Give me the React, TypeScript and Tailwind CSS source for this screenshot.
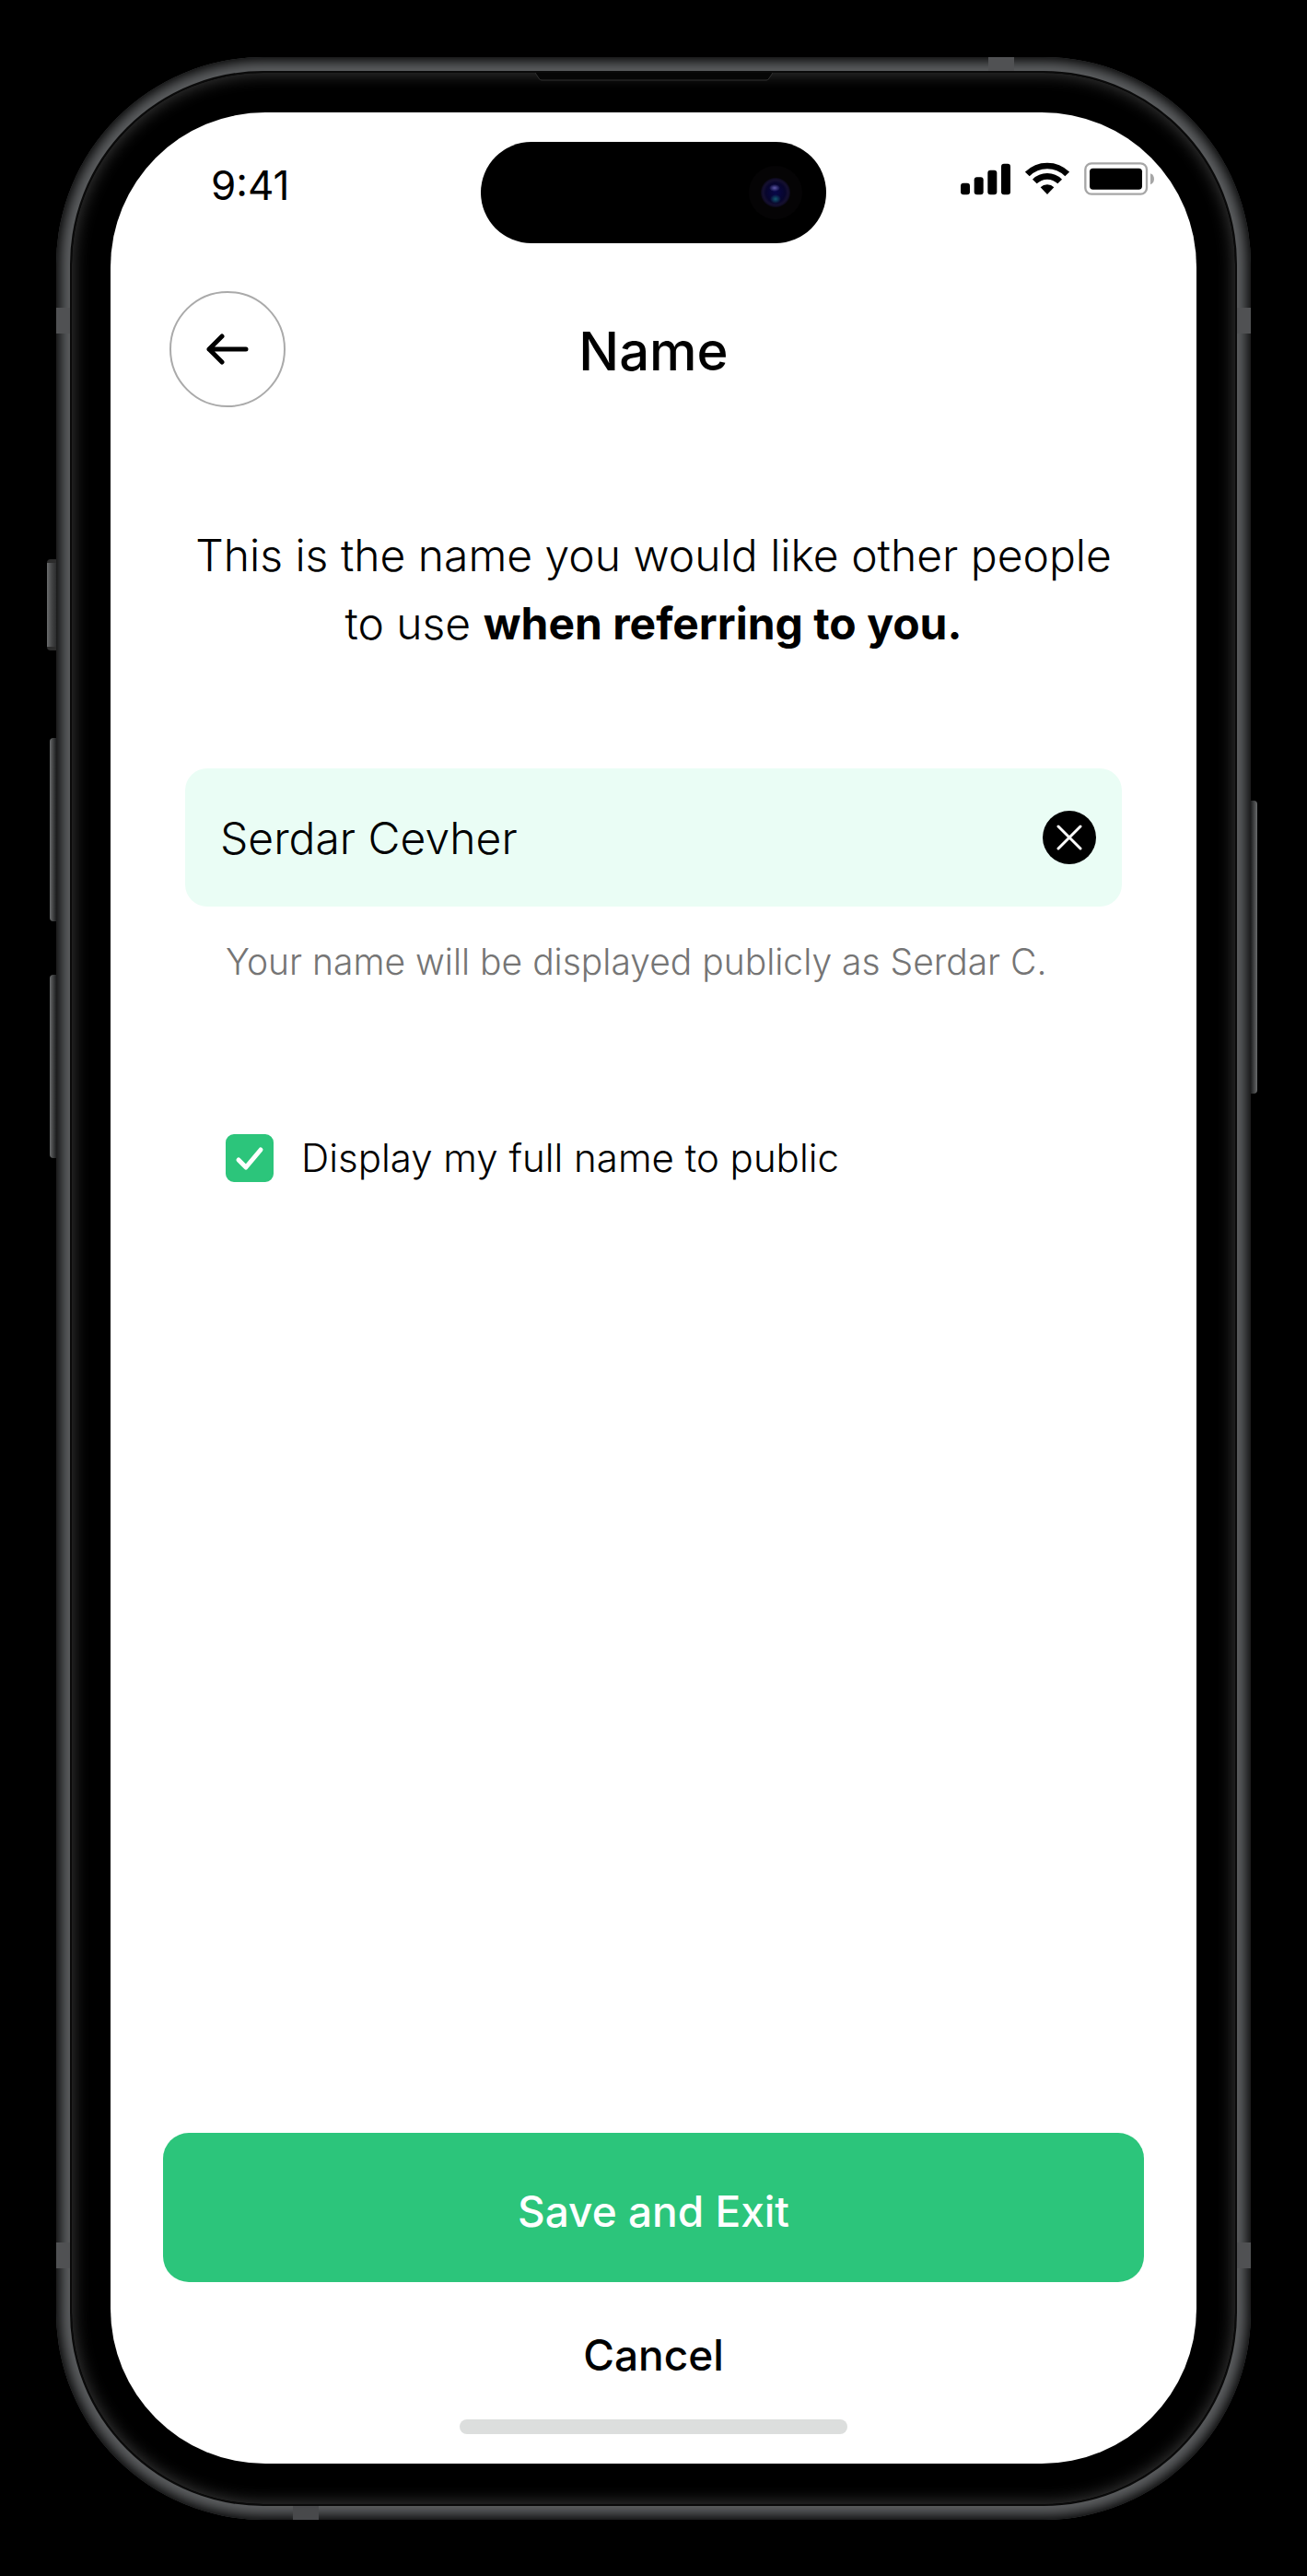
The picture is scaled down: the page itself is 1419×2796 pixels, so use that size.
import { useState } from 'react';

function SideButtons() {
  return (
    <>
      <span className="absolute -left-[10px] top-[545px] h-[99px] w-[10px] rounded-l-sm border-y-4 border-[#2c2c2c] bg-linear-to-r from-[#6a6c6d] via-[#454647] to-[#2c2d2e]" />
      <span className="absolute -left-[7px] top-[739px] h-[199px] w-[7px] rounded-l-sm bg-linear-to-r from-[#6a6c6d] to-[#1f2021]" />
      <span className="absolute -left-[7px] top-[996px] h-[199px] w-[7px] rounded-l-sm bg-linear-to-r from-[#6a6c6d] to-[#1f2021]" />
      <span className="absolute -right-[7px] top-[807px] h-[318px] w-[7px] rounded-r-sm bg-linear-to-r from-[#1f2021] to-[#6a6c6d]" />
    </>
  );
}

function AntennaBands() {
  return (
    <>
      <span className="absolute left-0 top-[272px] h-7 w-[15px] bg-[#505153]" />
      <span className="absolute right-0 top-[272px] h-7 w-[15px] bg-[#505153]" />
      <span className="absolute bottom-[273px] left-0 h-7 w-[15px] bg-[#505153]" />
      <span className="absolute bottom-[273px] right-0 h-7 w-[15px] bg-[#505153]" />
      <span className="absolute right-[257px] top-0 h-[15px] w-7 bg-[#505153]" />
      <span className="absolute bottom-0 left-[257px] h-[15px] w-7 bg-[#48494b]" />
    </>
  );
}

function DynamicIsland() {
  return (
    <div className="flex h-[110px] items-center justify-end rounded-full bg-black pr-[25px]">
      <svg width="60" height="60" viewBox="0 0 60 60" aria-hidden="true">
        <defs>
          <radialGradient id="lens">
            <stop offset="0" stopColor="#08074a" />
            <stop offset="0.65" stopColor="#07052c" />
            <stop offset="0.85" stopColor="#151030" />
            <stop offset="1" stopColor="#0b0818" />
          </radialGradient>
          <radialGradient id="glint">
            <stop offset="0" stopColor="#5f5aa8" />
            <stop offset="1" stopColor="#5f5aa8" stopOpacity="0" />
          </radialGradient>
          <radialGradient id="glintLow">
            <stop offset="0" stopColor="#125a70" />
            <stop offset="1" stopColor="#125a70" stopOpacity="0" />
          </radialGradient>
        </defs>
        <circle cx="30" cy="30" r="29" fill="#050405" />
        <circle cx="30" cy="30" r="16" fill="url(#lens)" />
        <ellipse cx="29" cy="25" rx="6" ry="4" fill="url(#glint)" />
        <ellipse cx="30" cy="37" rx="6" ry="5" fill="url(#glintLow)" />
      </svg>
    </div>
  );
}

function StatusIcons() {
  return (
    <div className="mt-[22px] flex items-center justify-end gap-4 pr-[46px]">
      <svg width="54" height="36" viewBox="40 46 162 108" aria-label="Signal">
        <rect x="40" y="114" width="30" height="38" rx="9" />
        <rect x="84" y="95" width="30" height="57" rx="9" />
        <rect x="128" y="72" width="30" height="80" rx="9" />
        <rect x="172" y="51" width="30" height="101" rx="9" />
      </svg>
      <svg width="48" height="36" viewBox="249 46 144 108" aria-label="Wi-Fi">
        <g fill="none" stroke="#000" strokeWidth="20">
          <path d="M256 85a92 92 0 0 1 130 0" />
          <path d="M280 109a58 58 0 0 1 82 0" />
        </g>
        <path d="M299 128a31 31 0 0 1 44 0l-22 23z" />
      </svg>
      <svg width="76" height="36" viewBox="441 46 228 108" aria-label="Battery">
        <rect x="445" y="50" width="200" height="100" rx="20" fill="none" stroke="#a6a6a6" strokeWidth="7" />
        <rect x="459" y="66" width="171" height="69" rx="11" />
        <path d="M657 83c8 3 12 10 12 18s-4 15-12 18z" fill="#a6a6a6" />
      </svg>
    </div>
  );
}

export default function App() {
  const [name, setName] = useState('Serdar Cevher');
  const [isPublic, setIsPublic] = useState(true);

  return (
    <div className="flex min-h-screen bg-black px-[61px] pb-[61px] pt-[62px] font-['Inter',sans-serif] text-black">
      <div className="relative flex flex-1 rounded-[225px] bg-[#5c5e60] p-[15px] shadow-[inset_0_0_14px_4px_#000]">
        <SideButtons />
        <AntennaBands />
        <div className="relative flex flex-1 rounded-[210px] border-2 border-[#0a0a0a] bg-black px-[42px] pb-11 pt-[43px] shadow-[inset_0_0_18px_1px_#3c3c3c]">
          <svg className="absolute left-1/2 top-0 -translate-x-1/2" width="258" height="9" viewBox="0 0 258 9" aria-hidden="true">
            <path d="M0 0l4 6q1 2 3 2h244q2 0 3-2l4-6" fill="#060606" stroke="#303030" strokeWidth="1" />
          </svg>

          <main className="flex flex-1 flex-col rounded-[168px] bg-white">
            <div className="grid grid-cols-[1fr_375px_1fr] items-start pt-8">
              <time className="mt-[14px] pl-[109px] text-[44px] leading-[66px]">9:41</time>
              <DynamicIsland />
              <StatusIcons />
            </div>

            <header className="mt-[52px] grid grid-cols-[126px_1fr_126px] items-center px-16">
              <button type="button" aria-label="Go back" className="flex h-[126px] items-center justify-center rounded-full border-2 border-[#aaaaaa]">
                <svg width="46" height="34" viewBox="0 0 46 34" fill="none" stroke="#000" strokeWidth="5" strokeLinecap="round" strokeLinejoin="round" aria-hidden="true">
                  <path d="M43 17H3M17 3L3 17l14 14" />
                </svg>
              </button>
              <h1 className="pt-1 text-center text-[58px] font-medium leading-[80px]">Name</h1>
            </header>

            <section className="flex flex-col px-[81px]">
              <p className="mt-[124px] text-center text-[48px] font-light leading-[74px]">
                This is the name you would like other people
                <br />
                to use <strong className="font-bold">when referring to you.</strong>
              </p>

              <div className="mt-[120px] flex h-[150px] items-center rounded-3xl bg-[#eafdf5] pl-[38px] pr-7">
                <input
                  type="text"
                  value={name}
                  onChange={(e) => setName(e.target.value)}
                  aria-label="Name"
                  aria-describedby="name-hint"
                  className="h-full min-w-0 flex-1 bg-transparent text-[48px] font-light outline-none"
                />
                <button type="button" aria-label="Clear name" onClick={() => setName('')} className="flex size-[58px] items-center justify-center rounded-full bg-black">
                  <svg width="28" height="28" viewBox="0 0 28 28" fill="none" stroke="#fff" strokeWidth="3" strokeLinecap="round" aria-hidden="true">
                    <path d="M2 2l24 24M26 2L2 26" />
                  </svg>
                </button>
              </div>
              <p id="name-hint" className="mt-[30px] pl-11 text-[39px] font-light leading-[60px] text-[#757575]">
                Your name will be displayed publicly as Serdar C.
              </p>

              <div className="mt-[157px] flex items-center gap-[30px] pl-11">
                <span className="relative size-[52px]">
                  <input
                    id="public"
                    type="checkbox"
                    checked={isPublic}
                    onChange={(e) => setIsPublic(e.target.checked)}
                    className="peer block size-full appearance-none rounded-[9px] border-2 border-[#2cc57b] checked:bg-[#2cc57b]"
                  />
                  <svg className="pointer-events-none absolute inset-0 hidden peer-checked:block" width="52" height="52" viewBox="0 0 52 52" fill="none" stroke="#fff" strokeWidth="5" strokeLinecap="round" strokeLinejoin="round" aria-hidden="true">
                    <path d="M14 28l8 8 16-19" />
                  </svg>
                </span>
                <label htmlFor="public" className="text-[42px] font-light leading-[52px]">Display my full name to public</label>
              </div>
            </section>

            <footer className="mt-auto flex flex-col items-center px-[57px] pb-8">
              <button type="button" className="h-[162px] w-full rounded-[28px] bg-[#2cc57b] pt-2 text-[46px] font-medium text-white">
                Save and Exit
              </button>
              <button type="button" className="mt-[47px] text-[46px] font-medium leading-[64px]">Cancel</button>
              <span className="mt-[38px] h-4 w-[421px] rounded-full bg-[#dcdedd]" />
            </footer>
          </main>
        </div>
      </div>
    </div>
  );
}
